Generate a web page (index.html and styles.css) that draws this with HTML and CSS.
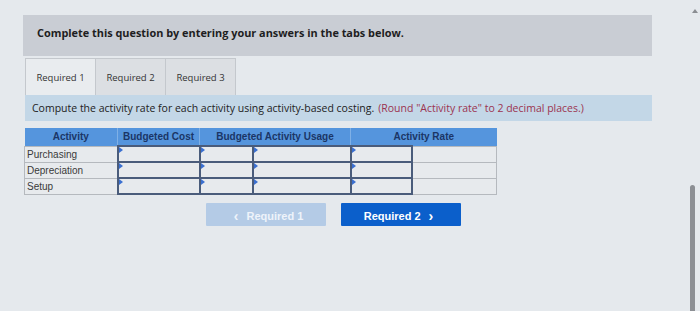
FILE: index.html
```html
<!DOCTYPE html>
<html lang="en">

<head>
    <meta charset="UTF-8">
    <meta name="viewport" content="width=device-width, initial-scale=1.0">
    <title>Activity rates</title>
    <link rel="stylesheet" href="styles.css">
</head>

<body>
    <div class="page">
        <div class="question">
            <div class="prompt">Complete this question by entering your answers in the tabs below.</div>

            <div class="tabs">
                <div class="tab active">Required 1</div>
                <div class="tab">Required 2</div>
                <div class="tab">Required 3</div>
            </div>

            <div class="instructions">
                Compute the activity rate for each activity using activity-based costing.
                <span class="note">(Round "Activity rate" to 2 decimal places.)</span>
            </div>

            <table class="grid">
                <colgroup>
                    <col style="width:93px">
                    <col style="width:82px">
                    <col style="width:53px">
                    <col style="width:98px">
                    <col style="width:61px">
                    <col style="width:85px">
                </colgroup>
                <thead>
                    <tr>
                        <th>Activity</th>
                        <th>Budgeted Cost</th>
                        <th colspan="2">Budgeted Activity Usage</th>
                        <th colspan="2">Activity Rate</th>
                    </tr>
                </thead>
                <tbody>
                    <tr>
                        <td class="label">Purchasing</td>
                        <td class="entry"></td>
                        <td class="entry"></td>
                        <td class="entry"></td>
                        <td class="entry"></td>
                        <td class="result"></td>
                    </tr>
                    <tr>
                        <td class="label">Depreciation</td>
                        <td class="entry"></td>
                        <td class="entry"></td>
                        <td class="entry"></td>
                        <td class="entry"></td>
                        <td class="result"></td>
                    </tr>
                    <tr>
                        <td class="label">Setup</td>
                        <td class="entry"></td>
                        <td class="entry"></td>
                        <td class="entry"></td>
                        <td class="entry"></td>
                        <td class="result"></td>
                    </tr>
                </tbody>
            </table>

            <div class="nav">
                <button class="nav-btn prev" disabled><span class="chev">&lsaquo;</span> Required 1</button>
                <button class="nav-btn next">Required 2 <span class="chev">&rsaquo;</span></button>
            </div>
        </div>

        <div class="scrollbar">
            <span class="arrow"></span>
            <span class="thumb"></span>
        </div>
    </div>
</body>

</html>
```

FILE: styles.css
```css
body {
    margin: 0;
    background: #e5e9ed;
    font-family: "Open Sans", "DejaVu Sans", sans-serif;
    color: #2b2b2b;
}

.page {
    position: relative;
    height: 311px;
    overflow: hidden;
}

.question {
    width: 629px;
    margin-left: 23px;
    padding-top: 15px;
}

.prompt {
    background: #c9cdd4;
    height: 41px;
    box-sizing: border-box;
    padding: 0 0 6px 14px;
    display: flex;
    align-items: center;
    font-size: 10.9px;
    font-weight: bold;
    color: #1e1e22;
}

.tabs {
    display: flex;
    margin-top: 2px;
    margin-left: 2px;
}

.tab {
    width: 71px;
    height: 37px;
    box-sizing: border-box;
    display: flex;
    align-items: center;
    justify-content: center;
    font-size: 9.5px;
    color: #333;
    background: #dcdfe3;
    border: 1px solid #c4c8cd;
    border-bottom: none;
    margin-right: -1px;
}

.tab.active {
    background: #e9ecef;
}

.instructions {
    background: #c3d7e7;
    height: 26px;
    margin-left: 2px;
    padding-left: 7px;
    display: flex;
    align-items: center;
    gap: 4px;
    font-size: 10.5px;
    color: #222;
}

.note {
    color: #9c3450;
}

.grid {
    margin-top: 7px;
    margin-left: 1px;
    border-collapse: collapse;
    table-layout: fixed;
    width: 472px;
    font-family: "Liberation Sans", Arial, sans-serif;
}

.grid th {
    background: #5595dd;
    color: #1b3566;
    font-size: 10px;
    height: 17px;
    padding: 0;
    border-left: 1px solid #7fb0e6;
}

.grid th:first-child {
    border-left: none;
}

.grid td {
    height: 14px;
    padding: 0;
    border: 1px solid #b5b9be;
    background: #e7eaed;
}

.grid td.label {
    font-size: 10px;
    color: #3a3a3a;
    padding-left: 2px;
}

.grid td.entry {
    position: relative;
    border: 2px solid #4a5c7b;
}

/* little marker in the corner of every input cell */
.grid td.entry::before {
    content: "";
    position: absolute;
    top: 0;
    left: 0;
    border-top: 3px solid transparent;
    border-bottom: 3px solid transparent;
    border-left: 4px solid #3a6fd0;
}

.nav {
    display: flex;
    justify-content: center;
    gap: 15px;
    margin-top: 8px;
    padding-right: 8px;
}

.nav-btn {
    width: 120px;
    height: 23px;
    border: none;
    border-radius: 1px;
    color: #fff;
    font-family: "Liberation Sans Narrow", "Liberation Sans", Arial, sans-serif;
    font-size: 11px;
    font-weight: bold;
}

.nav-btn.prev {
    background: #b4cbe6;
    color: #eef3fa;
}

.nav-btn.next {
    background: #0b5fcb;
}

.chev {
    font-size: 14px;
    margin: 0 5px;
    position: relative;
    top: 1px;
}

.scrollbar .arrow {
    position: absolute;
    top: 9px;
    right: 2px;
    border-left: 3px solid transparent;
    border-right: 3px solid transparent;
    border-bottom: 4px solid #8a8d92;
}

.scrollbar .thumb {
    position: absolute;
    top: 185px;
    right: 5px;
    width: 5px;
    height: 130px;
    border-radius: 3px;
    background: #8c8f94;
}
```
